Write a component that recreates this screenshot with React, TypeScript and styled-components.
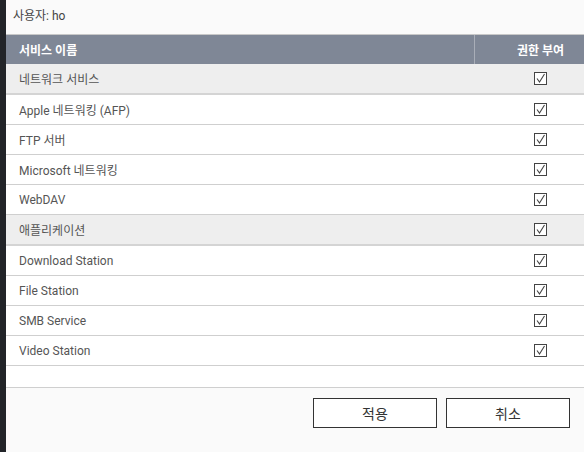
import React from "react";
import styled, { createGlobalStyle } from "styled-components";

const GlobalStyle = createGlobalStyle`
  html, body {
    margin: 0;
    padding: 0;
    background: #222428;
  }
  body {
    font-family: Roboto, "Noto Sans CJK KR", "Liberation Sans", sans-serif;
  }
`;

const Page = styled.div`
  display: flex;
  width: 584px;
  height: 452px;
  overflow: hidden;
`;

const Edge = styled.div`
  width: 6px;
  flex: none;
  background: #222428;
`;

const Dialog = styled.div`
  flex: 1;
  display: flex;
  flex-direction: column;
  background: #fafafa;
  min-width: 0;
`;

const UserLine = styled.div`
  height: 35px;
  line-height: 32px;
  padding-left: 7px;
  font-size: 12px;
  color: #444;
  border-bottom: 1px solid #c8c8c8;
  box-sizing: border-box;
`;

const Table = styled.div`
  display: flex;
  flex-direction: column;
  background: #fff;
  border-bottom: 1px solid #cfcfcf;
`;

const HeadRow = styled.div`
  display: grid;
  grid-template-columns: 468px 1fr;
  height: 29px;
  background: #7f8796;
  color: #fff;
  font-size: 12px;
  font-weight: bold;
`;

const HeadCell = styled.div<{ $center?: boolean }>`
  display: flex;
  align-items: center;
  padding-left: ${(p) => (p.$center ? "22px" : "13px")};
  justify-content: ${(p) => (p.$center ? "center" : "flex-start")};
  border-left: ${(p) => (p.$center ? "1px solid #a9aeb8" : "none")};
`;

const Row = styled.div<{ $group?: boolean }>`
  display: grid;
  grid-template-columns: 468px 1fr;
  height: ${(p) => (p.$group ? 31 : 30)}px;
  box-sizing: border-box;
  background: ${(p) => (p.$group ? "#eeeeee" : "#fff")};
  border-bottom: ${(p) => (p.$group ? "2px solid #d4d4d4" : "1px solid #cfcfcf")};
  font-size: 12px;
  color: #555;
`;

const Name = styled.div`
  display: flex;
  align-items: center;
  padding-left: 13px;
`;

const CheckCell = styled.div`
  display: flex;
  align-items: center;
  justify-content: center;
  padding-left: 22px;
`;

const Filler = styled.div`
  height: 21px;
`;

const Footer = styled.div`
  display: flex;
  justify-content: flex-end;
  gap: 9px;
  padding: 10px 14px 0 0;
`;

const Button = styled.button`
  width: 124px;
  height: 30px;
  background: #fff;
  border: 1px solid #333;
  border-radius: 0;
  font-family: Roboto, "Noto Sans CJK KR", sans-serif;
  font-size: 14px;
  color: #333;
  padding: 0;
`;

const Check = () => (
  <svg width="13" height="13" viewBox="0 0 13 13">
    <rect x="0.5" y="0.5" width="12" height="12" fill="#fff" stroke="#444" />
    <path d="M3 6.5 L5.5 10 L10.5 2" fill="none" stroke="#444" strokeWidth="1.1" />
  </svg>
);

const rows: { name: string; group?: boolean }[] = [
  { name: "네트워크 서비스", group: true },
  { name: "Apple 네트워킹 (AFP)" },
  { name: "FTP 서버" },
  { name: "Microsoft 네트워킹" },
  { name: "WebDAV" },
  { name: "애플리케이션", group: true },
  { name: "Download Station" },
  { name: "File Station" },
  { name: "SMB Service" },
  { name: "Video Station" },
];

export default function App() {
  return (
    <>
      <GlobalStyle />
      <Page>
        <Edge />
        <Dialog>
          <UserLine>사용자: ho</UserLine>
          <Table>
            <HeadRow>
              <HeadCell>서비스 이름</HeadCell>
              <HeadCell $center>권한 부여</HeadCell>
            </HeadRow>
            {rows.map((r) => (
              <Row key={r.name} $group={r.group}>
                <Name>{r.name}</Name>
                <CheckCell>
                  <Check />
                </CheckCell>
              </Row>
            ))}
            <Filler />
          </Table>
          <Footer>
            <Button>적용</Button>
            <Button>취소</Button>
          </Footer>
        </Dialog>
      </Page>
    </>
  );
}
